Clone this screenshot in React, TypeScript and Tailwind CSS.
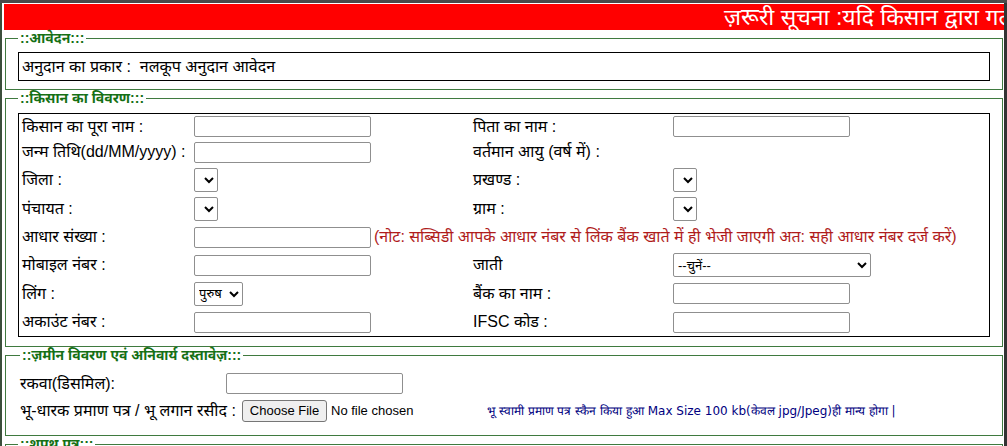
import React from "react";

const font = "font-['Liberation_Sans','Noto_Sans',sans-serif]";

function Legend({ children }: { children: React.ReactNode }) {
  return (
    <legend className="flex items-center h-[16px] px-[2px] text-[14px] leading-[16px] font-bold text-[#157015] whitespace-nowrap">
      {children}
    </legend>
  );
}

function TextBox() {
  return <input type="text" className="w-[177px] h-[21px] border border-[#8f8f8f] rounded-[2px] bg-white align-middle" />;
}

function Dropdown({ children, w = "w-[24px]" }: { children?: React.ReactNode; w?: string }) {
  return (
    <select className={`${w} h-[24px] border border-[#8f8f8f] rounded-[2px] bg-white text-[13px] text-black align-middle`}>
      {children}
    </select>
  );
}

export default function App() {
  return (
    <div className={`w-[1007px] h-[446px] overflow-hidden bg-white text-black ${font}`}>
      <div className="h-[3px] bg-[#4a4a4a]" />
      <div className="h-[443px] border-l-[2px] border-[#3b4f3b] border-r-[3px] border-r-[#333] pl-[2px] pt-[1px]">
        <div className="h-[26px] bg-[#ff0000] text-white text-[23px] leading-[26px] whitespace-nowrap overflow-hidden pl-[720px]">
          ज़रूरी सूचना :यदि किसान द्वारा गलत
        </div>

        <fieldset className="mx-[1px] border border-[#3f7a3f] px-[12px] pt-[6px] pb-[8px]">
          <Legend>::आवेदन:::</Legend>
          <div className="h-[29px] border border-black flex items-center pl-[3px] text-[16px]">
            अनुदान का प्रकार :&nbsp;&nbsp;नलकूप अनुदान आवेदन
          </div>
        </fieldset>

        <fieldset className="mx-[1px] border border-[#3f7a3f] px-[12px] pt-[7px] pb-[9px]">
          <Legend>::किसान का विवरण:::</Legend>
          <div className="border border-black pl-[3px] text-[16px] leading-[20px] grid grid-cols-[172px_279px_200px_1fr] items-center">
            <div className="h-[25px] flex items-center">किसान का पूरा नाम :</div>
            <div><TextBox /></div>
            <div>पिता का नाम :</div>
            <div><TextBox /></div>

            <div className="h-[26px] flex items-center">जन्म तिथि(dd/MM/yyyy) :</div>
            <div><TextBox /></div>
            <div>वर्तमान आयु (वर्ष में) :</div>
            <div />

            <div className="h-[29px] flex items-center">जिला :</div>
            <div><Dropdown /></div>
            <div>प्रखण्ड :</div>
            <div><Dropdown /></div>

            <div className="h-[29px] flex items-center">पंचायत :</div>
            <div><Dropdown /></div>
            <div>ग्राम :</div>
            <div><Dropdown /></div>

            <div className="h-[28px] flex items-center">आधार संख्या :</div>
            <div className="col-span-3 flex items-center gap-[3px]">
              <TextBox />
              <span className="text-[#b01c1c] whitespace-nowrap">
                (नोट: सब्सिडी आपके आधार नंबर से लिंक बैंक खाते में ही भेजी जाएगी अत: सही आधार नंबर दर्ज करें)
              </span>
            </div>

            <div className="h-[28px] flex items-center">मोबाइल नंबर :</div>
            <div><TextBox /></div>
            <div>जाती</div>
            <div>
              <Dropdown w="w-[198px]">
                <option>--चुनें--</option>
              </Dropdown>
            </div>

            <div className="h-[29px] flex items-center">लिंग :</div>
            <div>
              <Dropdown w="w-[49px]">
                <option>पुरुष</option>
              </Dropdown>
            </div>
            <div>बैंक का नाम :</div>
            <div><TextBox /></div>

            <div className="h-[28px] flex items-center">अकाउंट नंबर :</div>
            <div><TextBox /></div>
            <div>IFSC कोड :</div>
            <div><TextBox /></div>
          </div>
        </fieldset>

        <fieldset className="mx-[1px] border border-[#3f7a3f] pl-[14px] pr-[12px] pt-[7px] pb-[11px] text-[16px]">
          <Legend>::ज़मीन विवरण एवं अनिवार्य दस्तावेज़:::</Legend>
          <div className="flex items-center h-[27px]">
            <span className="w-[206px]">रकवा(डिसमिल):</span>
            <TextBox />
          </div>
          <div className="flex items-center h-[27px]">
            <span className="w-[222px] whitespace-nowrap">भू-धारक प्रमाण पत्र / भू लगान रसीद :</span>
            <button className="w-[85px] h-[22px] border border-[#767676] rounded-[3px] bg-[#efefef] text-[13px] leading-[20px]">
              Choose File
            </button>
            <span className="w-[160px] pl-[4px] text-[13px]">No file chosen</span>
            <span className="font-['DejaVu_Sans',sans-serif] text-[12px] text-[#000080] whitespace-nowrap">
              भू स्वामी प्रमाण पत्र स्कैन किया हुआ Max Size 100 kb(केवल jpg/Jpeg)ही मान्य होगा |
            </span>
          </div>
        </fieldset>

        <fieldset className="mx-[1px] border border-[#3f7a3f] px-[12px] pt-[6px] pb-[20px]">
          <Legend>::शपथ पत्र:::</Legend>
          <div className="h-[20px]" />
        </fieldset>
      </div>
    </div>
  );
}
